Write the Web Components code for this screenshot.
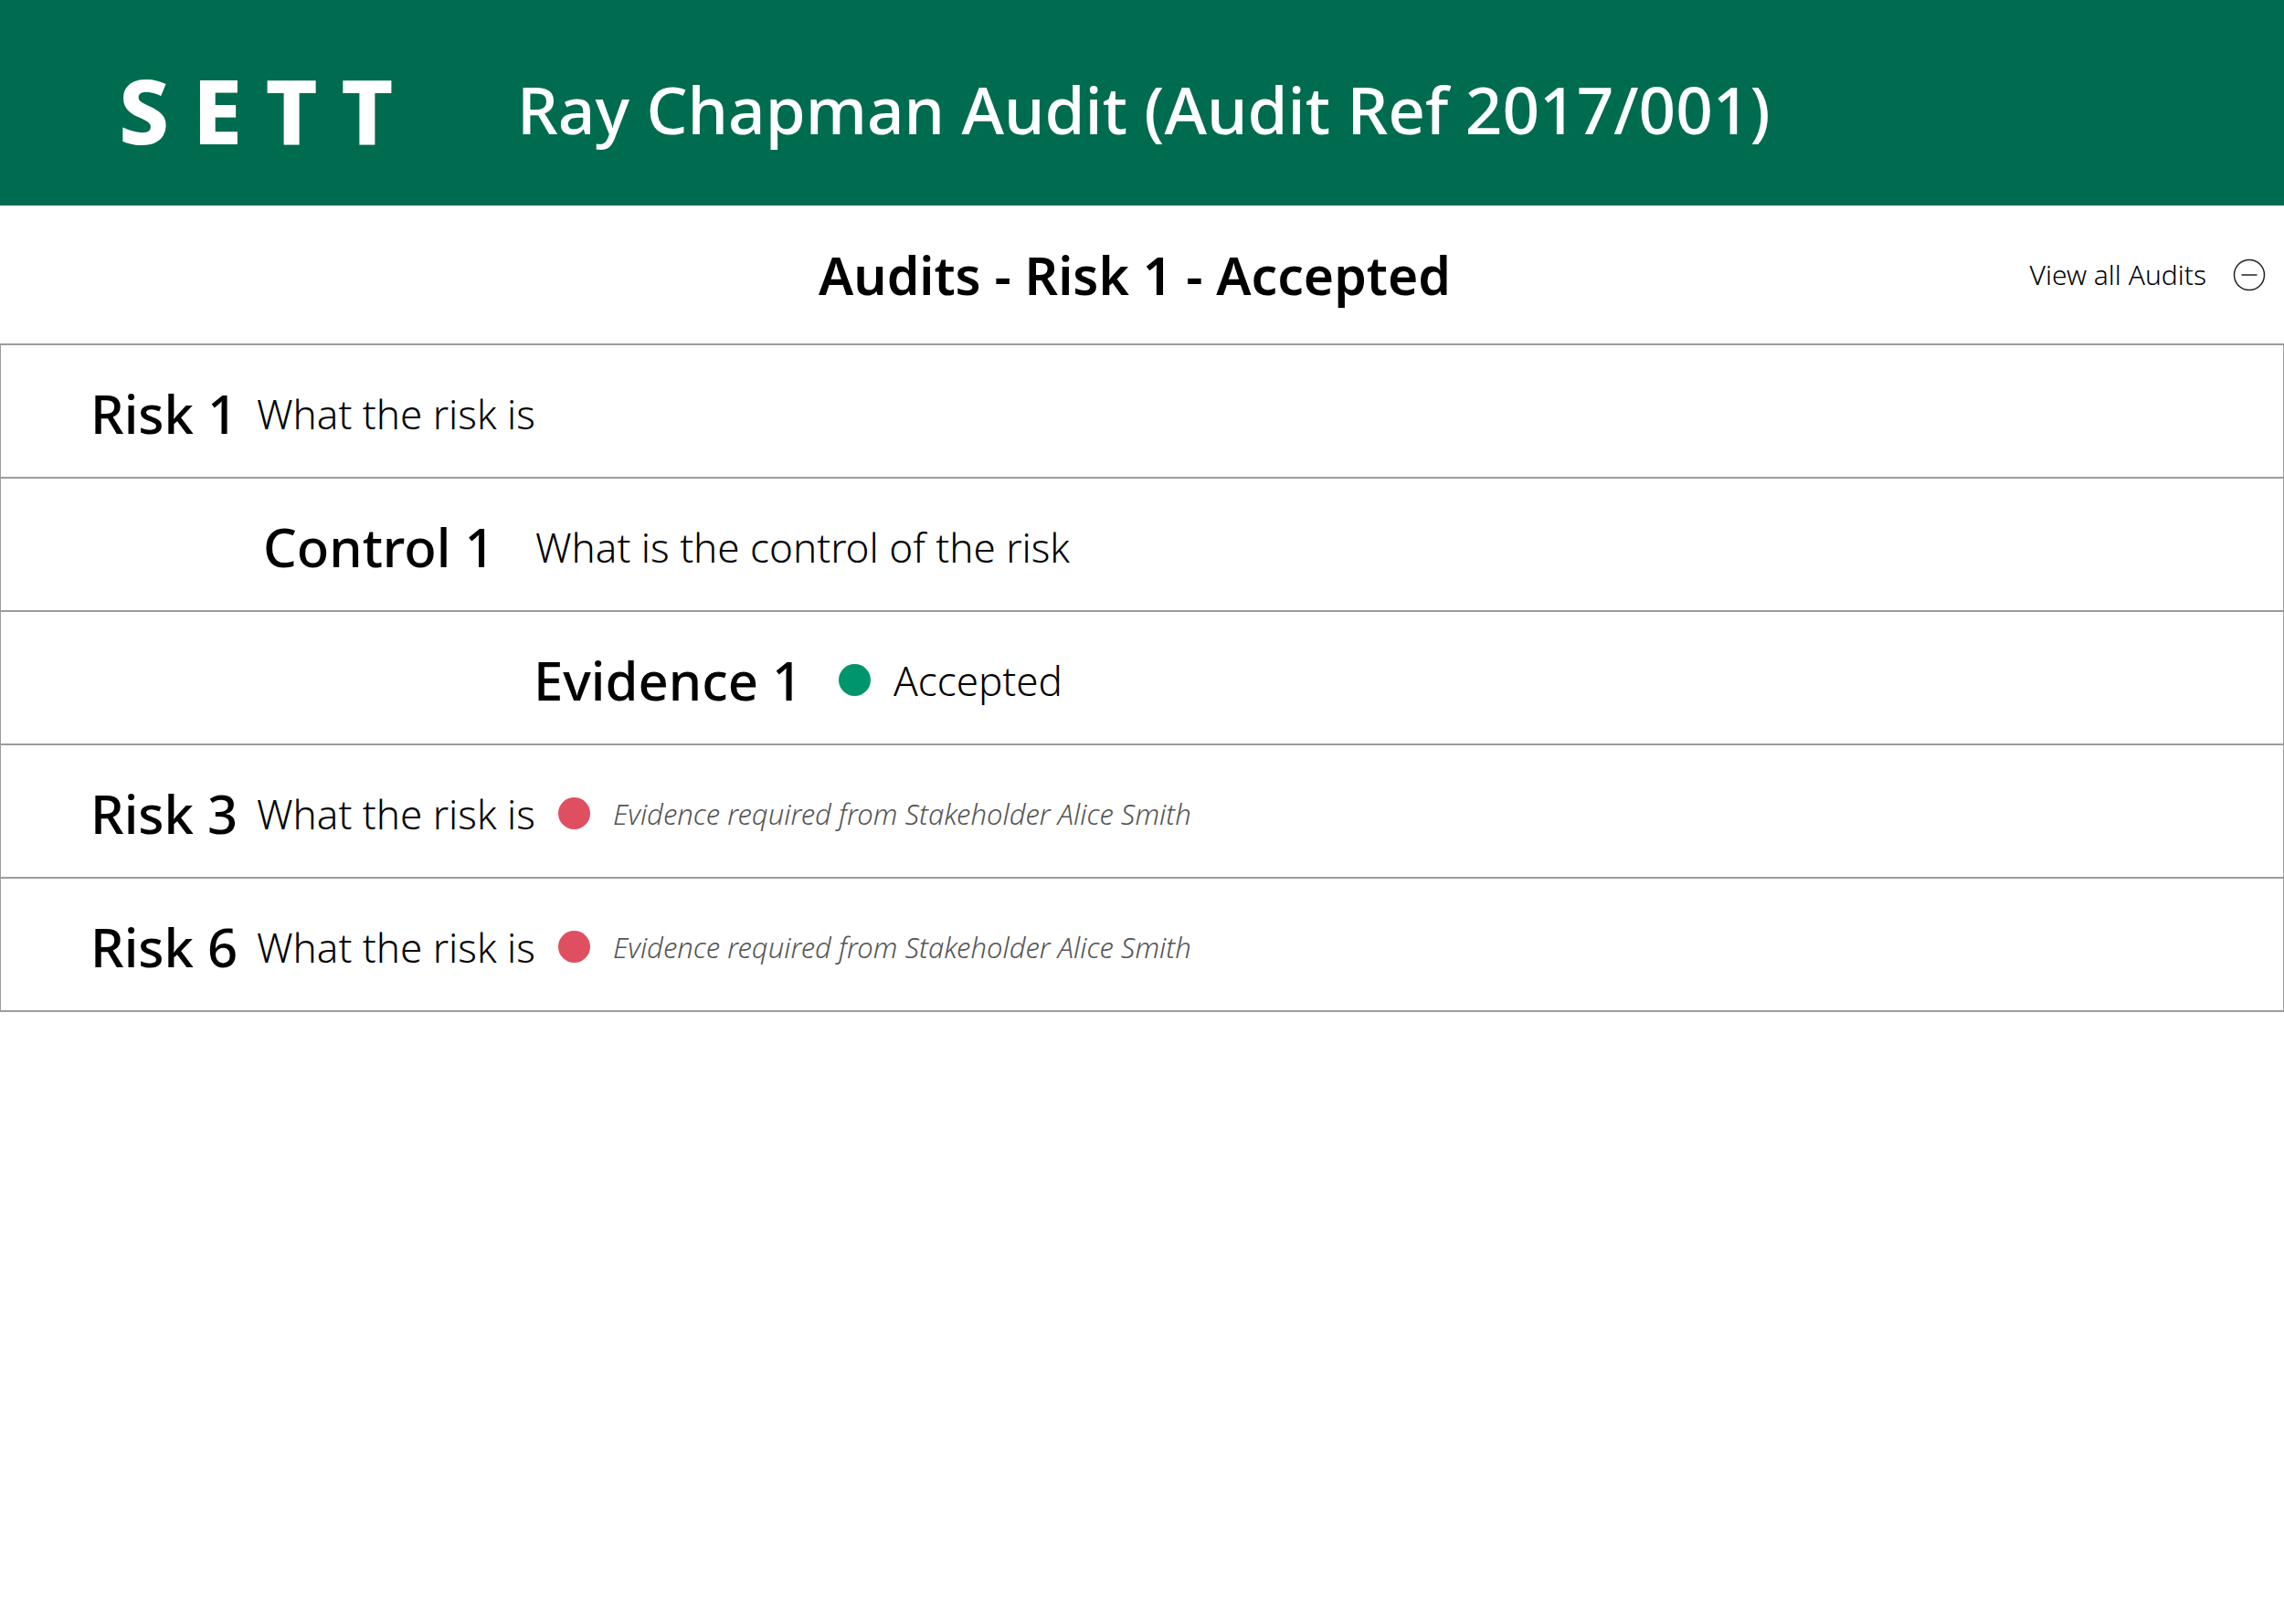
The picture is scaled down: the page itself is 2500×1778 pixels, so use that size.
<!DOCTYPE html>
<html lang="en">
<head>
  <meta charset="utf-8">
  <meta name="viewport" content="width=device-width, initial-scale=1">
  <title>SETT - Ray Chapman Audit</title>
  <style>
    body {
      margin: 0;
      background-color: #fff;
      color: #000;
      font-family: "Noto Sans", "Open Sans", sans-serif;
    }
  </style>
</head>
<body>
  <sett-header brand="S E T T">Ray Chapman Audit (Audit Ref 2017/001)</sett-header>
  <main>
    <audit-toolbar>
      Audits - Risk 1 - Accepted
      <view-all-link slot="action" href="#audits">View all Audits</view-all-link>
    </audit-toolbar>
    <audit-list id="audits">
      <audit-row label="Risk 1">What the risk is</audit-row>
      <audit-row level="control" label="Control 1">What is the control of the risk</audit-row>
      <audit-row level="evidence" label="Evidence 1">
        <audit-status state="accepted">Accepted</audit-status>
      </audit-row>
      <audit-row label="Risk 3">
        What the risk is
        <audit-status slot="status" state="required">Evidence required from Stakeholder Alice Smith</audit-status>
      </audit-row>
      <audit-row label="Risk 6">
        What the risk is
        <audit-status slot="status" state="required">Evidence required from Stakeholder Alice Smith</audit-status>
      </audit-row>
    </audit-list>
  </main>

  <script>
    // Green bar with the brand and the name of the audit
    class SettHeader extends HTMLElement {
      constructor() {
        super();
        this.attachShadow({ mode: "open" });
      }

      connectedCallback() {
        this.shadowRoot.innerHTML = `
          <style>
            :host {
              display: block;
            }
            header {
              display: grid;
              grid-template-columns: 436px 1fr;
              align-items: center;
              min-height: 211px;
              padding: 14px 20px 0 130px;
              background-color: #006c4f;
              color: #fff;
            }
            .brand {
              font-size: 98px;
              font-weight: 800;
              line-height: 120px;
            }
            h1 {
              margin: 0;
              font-size: 71px;
              font-weight: 500;
              line-height: 96px;
            }
          </style>
          <header>
            <span class="brand">${this.getAttribute("brand")}</span>
            <h1><slot></slot></h1>
          </header>
        `;
      }
    }

    // Centred heading, with room for one action on the right
    class AuditToolbar extends HTMLElement {
      constructor() {
        super();
        this.attachShadow({ mode: "open" });
      }

      connectedCallback() {
        this.shadowRoot.innerHTML = `
          <style>
            :host {
              display: grid;
              grid-template-columns: 1fr auto 1fr;
              align-items: center;
              min-height: 151px;
              padding: 0 20px 0 4px;
            }
            h2 {
              grid-column: 2;
              margin: 0;
              font-size: 57px;
              font-weight: 600;
              line-height: 76px;
            }
            .action {
              justify-self: end;
            }
          </style>
          <h2><slot></slot></h2>
          <div class="action"><slot name="action"></slot></div>
        `;
      }
    }

    class ViewAllLink extends HTMLElement {
      constructor() {
        super();
        this.attachShadow({ mode: "open" });
      }

      connectedCallback() {
        this.shadowRoot.innerHTML = `
          <style>
            :host {
              display: block;
            }
            a {
              display: flex;
              align-items: center;
              gap: 29px;
              color: inherit;
              font-size: 30px;
              font-weight: 300;
              line-height: 40px;
              text-decoration: none;
            }
            svg {
              width: 36px;
              height: 36px;
              fill: none;
              stroke: #222;
              stroke-width: 1.5;
            }
          </style>
          <a href="${this.getAttribute("href")}">
            <slot></slot>
            <svg viewBox="0 0 36 36" aria-hidden="true">
              <circle cx="18" cy="18" r="16.5"/>
              <path d="M9.5 18h17"/>
            </svg>
          </a>
        `;
      }
    }

    class AuditList extends HTMLElement {
      constructor() {
        super();
        this.attachShadow({ mode: "open" });
      }

      connectedCallback() {
        this.setAttribute("role", "list");
        this.shadowRoot.innerHTML = `
          <style>
            :host {
              display: block;
              border: solid #9c9c9c;
              border-width: 2px 1px 0;
            }
          </style>
          <slot></slot>
        `;
      }
    }

    // One line of the tree: the level sets the indent and the column widths
    class AuditRow extends HTMLElement {
      constructor() {
        super();
        this.attachShadow({ mode: "open" });
      }

      connectedCallback() {
        this.setAttribute("role", "listitem");
        this.shadowRoot.innerHTML = `
          <style>
            :host {
              display: grid;
              grid-template-columns: 182px 330px 1fr;
              align-items: center;
              min-height: 139px;
              padding: 5px 20px 0 98px;
              border-bottom: 2px solid #9c9c9c;
            }
            :host([level="control"]) {
              grid-template-columns: 298px 1fr;
              padding-left: 287px;
            }
            :host([level="evidence"]) {
              grid-template-columns: 334px 1fr;
              padding-left: 583px;
            }
            h3 {
              margin: 0;
              font-size: 58px;
              font-weight: 500;
              line-height: 76px;
            }
            .text {
              font-size: 44px;
              font-weight: 300;
              line-height: 60px;
            }
          </style>
          <h3>${this.getAttribute("label")}</h3>
          <div class="text"><slot></slot></div>
          <slot name="status"></slot>
        `;
      }
    }

    class AuditStatus extends HTMLElement {
      constructor() {
        super();
        this.attachShadow({ mode: "open" });
      }

      connectedCallback() {
        this.shadowRoot.innerHTML = `
          <style>
            :host {
              display: flex;
              align-items: center;
              gap: 25px;
              font-weight: 300;
            }
            :host([state="required"]) {
              color: #555;
              font-size: 31px;
              font-style: italic;
              line-height: 40px;
            }
            .dot {
              flex: none;
              width: 35px;
              height: 35px;
              border-radius: 50%;
              background-color: #00956d;
            }
            :host([state="required"]) .dot {
              background-color: #df4f5f;
            }
          </style>
          <span class="dot"></span>
          <span><slot></slot></span>
        `;
      }
    }

    customElements.define("sett-header", SettHeader);
    customElements.define("audit-toolbar", AuditToolbar);
    customElements.define("view-all-link", ViewAllLink);
    customElements.define("audit-list", AuditList);
    customElements.define("audit-row", AuditRow);
    customElements.define("audit-status", AuditStatus);
  </script>
</body>
</html>
